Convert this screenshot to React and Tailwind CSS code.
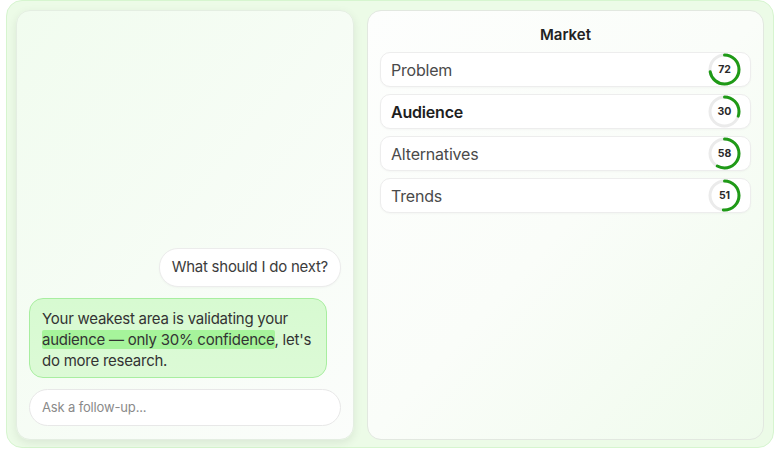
import React from 'react';

const scores = [
    { label: 'Problem', value: 72 },
    { label: 'Audience', value: 30, active: true },
    { label: 'Alternatives', value: 58 },
    { label: 'Trends', value: 51 },
];

function Ring({ value }) {
    const r = 14.5;
    const c = 2 * Math.PI * r;
    return (
        <div className="relative w-[33px] h-[33px] shrink-0">
            <svg width="33" height="33" viewBox="0 0 33 33" className="-rotate-90">
                <circle cx="16.5" cy="16.5" r={r} fill="none" stroke="#ebebeb" strokeWidth="3" />
                <circle
                    cx="16.5"
                    cy="16.5"
                    r={r}
                    fill="none"
                    stroke="#1f9a17"
                    strokeWidth="3"
                    strokeLinecap="round"
                    strokeDasharray={`${(c * value) / 100} ${c}`}
                />
            </svg>
            <span className="absolute inset-0 flex items-center justify-center text-[10.5px] font-bold text-[#2a2a2a]">
                {value}
            </span>
        </div>
    );
}

export default function App() {
    return (
        <div className="w-[780px] h-[450px] px-[6px] bg-white" style={{ fontFamily: 'Inter, "Noto Sans", sans-serif' }}>
            <div className="h-[448px] rounded-[16px] border border-[#d6f5cf] bg-[#ecfbe7] pt-[9px] px-[9px] pb-[7px] flex gap-[13px]">
                {/* Chat panel */}
                <div className="w-[338px] flex flex-col justify-end px-[12px] pb-[12px] rounded-[14px] border border-[#e4eee2] bg-gradient-to-br from-[#f1fcef] to-[#fbfdfb] shadow-[0_3px_10px_rgba(0,0,0,0.08)]">
                    <div className="self-end h-[39px] flex items-center px-[12px] rounded-[19px] border border-[#ececec] bg-white text-[15px] tracking-[-0.25px] text-[#3c3c3c] shadow-[0_1px_2px_rgba(0,0,0,0.03)]">
                        What should I do next?
                    </div>
                    <div className="mt-[11px] w-[298px] px-[12px] pt-[9px] pb-[6px] rounded-[14px] border border-[#a8eea0] bg-gradient-to-b from-[#d7fad1] to-[#dcfad6] text-[15px] leading-[21px] tracking-[-0.25px] text-[#333]">
                        Your weakest area is validating your{' '}
                        <span className="bg-[#a6f49b] rounded-[2px]">audience — only 30% confidence</span>, let's do more research.
                    </div>
                    <div className="mt-[11px] mb-[1px] h-[37px] flex items-center px-[12px] rounded-full border border-[#e8e8e8] bg-white text-[13px] tracking-[-0.15px] text-[#8a8a8a]">
                        Ask a follow-up...
                    </div>
                </div>

                {/* Market panel */}
                <div className="flex-1 px-[12px] pt-[14px] rounded-[14px] border border-[#e2e8e0] bg-gradient-to-br from-[#fdfefd] via-[#fafdf9] to-[#effbec]">
                    <h2 className="text-center text-[15px] leading-[20px] font-semibold text-[#222]">Market</h2>
                    <div className="mt-[7px] flex flex-col gap-[7px]">
                        {scores.map((s) => (
                            <div
                                key={s.label}
                                className="h-[35px] flex items-center justify-between pl-[10px] pr-[9px] rounded-[10px] border border-[#ededed] bg-white shadow-[0_1px_2px_rgba(0,0,0,0.03)]"
                            >
                                <span className={`text-[16px] tracking-[-0.2px] ${s.active ? 'font-semibold text-[#1e1e1e]' : 'text-[#4a4a4a]'}`}>
                                    {s.label}
                                </span>
                                <Ring value={s.value} />
                            </div>
                        ))}
                    </div>
                </div>
            </div>
        </div>
    );
}
